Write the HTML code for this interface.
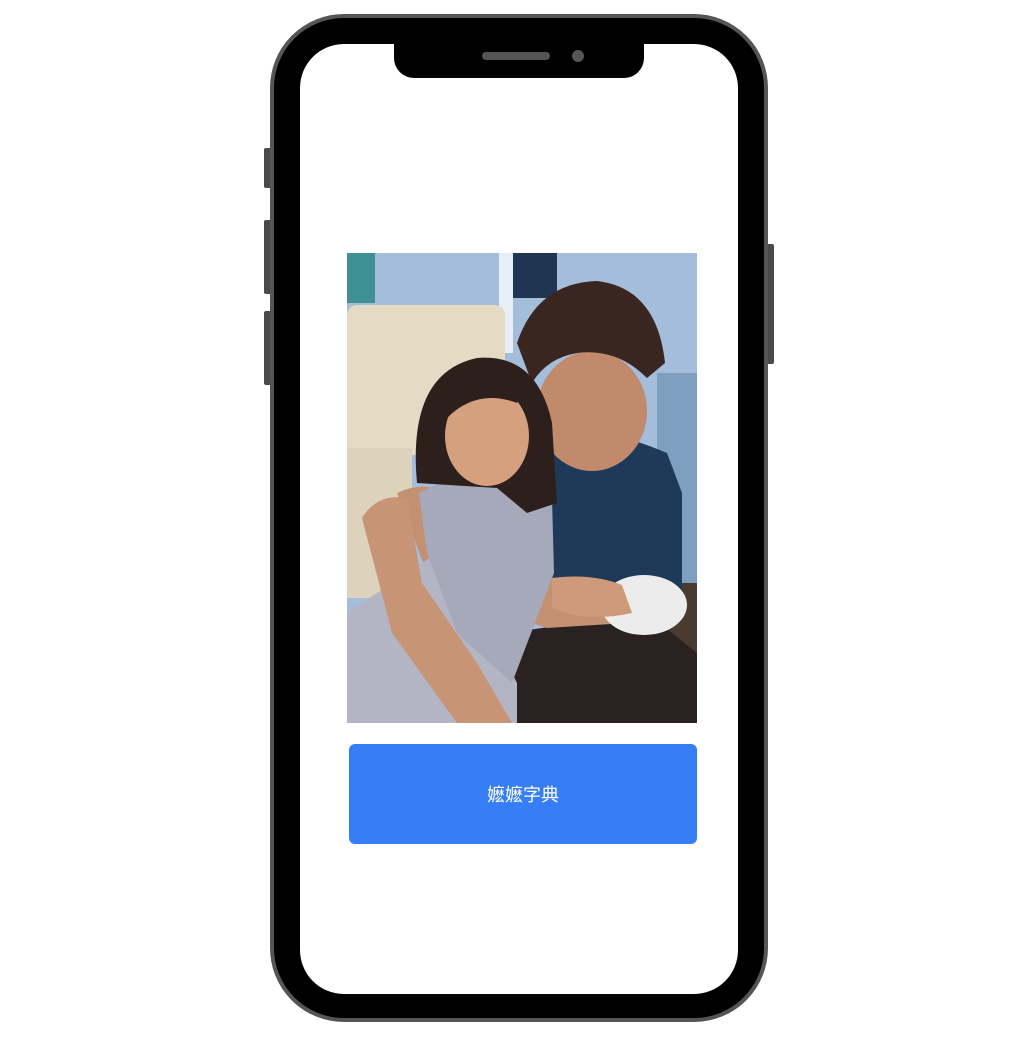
<!DOCTYPE html>
<html><head><meta charset="utf-8"><style>
html,body{margin:0;padding:0;background:#fff;width:1036px;height:1038px;overflow:hidden;position:relative}
.btnside{position:absolute;background:#4a4a4a;border-radius:2px}
.phone{position:absolute;left:270px;top:14px;width:490px;height:1000px;border:4px solid #555;border-radius:74px;background:#000}
.screen{position:absolute;left:300px;top:44px;width:438px;height:950px;background:#fff;border-radius:44px;overflow:hidden}
.notch{position:absolute;left:394px;top:40px;width:250px;height:38px;background:#000;border-radius:0 0 20px 20px}
.spk{position:absolute;left:482px;top:52px;width:68px;height:8px;background:#555;border-radius:4px}
.cam{position:absolute;left:572px;top:50px;width:12px;height:12px;background:#555;border-radius:50%}
.photo{position:absolute;left:347px;top:253px;width:350px;height:470px}
.btn{position:absolute;left:349px;top:744px;width:348px;height:100px;background:#367ef5;border-radius:6px;color:#fff;font:18px "Liberation Sans","Noto Sans CJK SC",sans-serif;display:flex;align-items:center;justify-content:center}
</style></head><body>
<div class="btnside" style="left:264px;top:148px;width:8px;height:40px"></div>
<div class="btnside" style="left:264px;top:220px;width:8px;height:74px"></div>
<div class="btnside" style="left:264px;top:311px;width:8px;height:74px"></div>
<div class="btnside" style="left:766px;top:244px;width:8px;height:120px"></div>
<div class="phone"></div>
<div class="screen"></div>
<div class="notch"></div>
<div class="spk"></div>
<div class="cam"></div>
<svg class="photo" viewBox="0 0 350 470" xmlns="http://www.w3.org/2000/svg">
<rect width="350" height="470" fill="#a3bddb"/>
<rect x="0" y="0" width="28" height="50" fill="#3f8f95"/>
<rect x="165" y="0" width="45" height="45" fill="#1f3552"/>
<rect x="152" y="0" width="14" height="100" fill="#e8eef5"/>
<rect x="0" y="52" width="158" height="150" rx="10" fill="#e5dbc4"/>
<rect x="0" y="195" width="65" height="150" fill="#ddd3bc"/>
<rect x="310" y="120" width="40" height="210" fill="#7f9fc0"/>
<rect x="300" y="330" width="50" height="140" fill="#4a3a30"/>
<path d="M195 180 Q250 170 320 200 L335 240 L335 340 L300 360 L200 360 Z" fill="#1f3a58"/>
<path d="M160 380 L300 360 L350 400 L350 470 L160 470 Z" fill="#2a2220"/>
<ellipse cx="245" cy="158" rx="55" ry="60" fill="#c18a6c"/>
<path d="M170 90 Q190 30 250 28 Q310 35 318 110 L300 125 Q270 95 230 100 Q200 105 185 130 Z" fill="#3a2620"/>
<path d="M50 240 Q80 225 110 245 L170 300 L220 335 L280 335 L280 370 L200 375 L120 350 L80 320 Z" fill="#c49072"/>
<path d="M0 360 L60 320 L90 300 L120 330 L170 430 L170 470 L0 470 Z" fill="#b4b5c4"/>
<path d="M72 240 L110 222 L150 228 L205 245 L207 320 L165 430 L110 380 L80 300 Z" fill="#a5a9ba"/>
<path d="M70 230 Q60 120 130 105 Q190 100 205 170 L210 250 L180 260 L150 235 Z" fill="#2d201c"/>
<ellipse cx="140" cy="183" rx="42" ry="50" fill="#d6a07f"/>
<path d="M95 140 Q120 110 175 130 L170 150 Q130 135 100 165 Z" fill="#2d201c"/>
<path d="M15 265 Q30 240 60 245 L75 330 L130 410 L165 470 L110 470 L45 380 Z" fill="#c89476"/>
<ellipse cx="297" cy="352" rx="43" ry="30" fill="#ececec"/>
<path d="M205 325 Q245 320 275 332 L285 360 Q240 370 205 355 Z" fill="#cf9a7a"/>
</svg>
<div class="btn">嬷嬷字典</div>
</body></html>
